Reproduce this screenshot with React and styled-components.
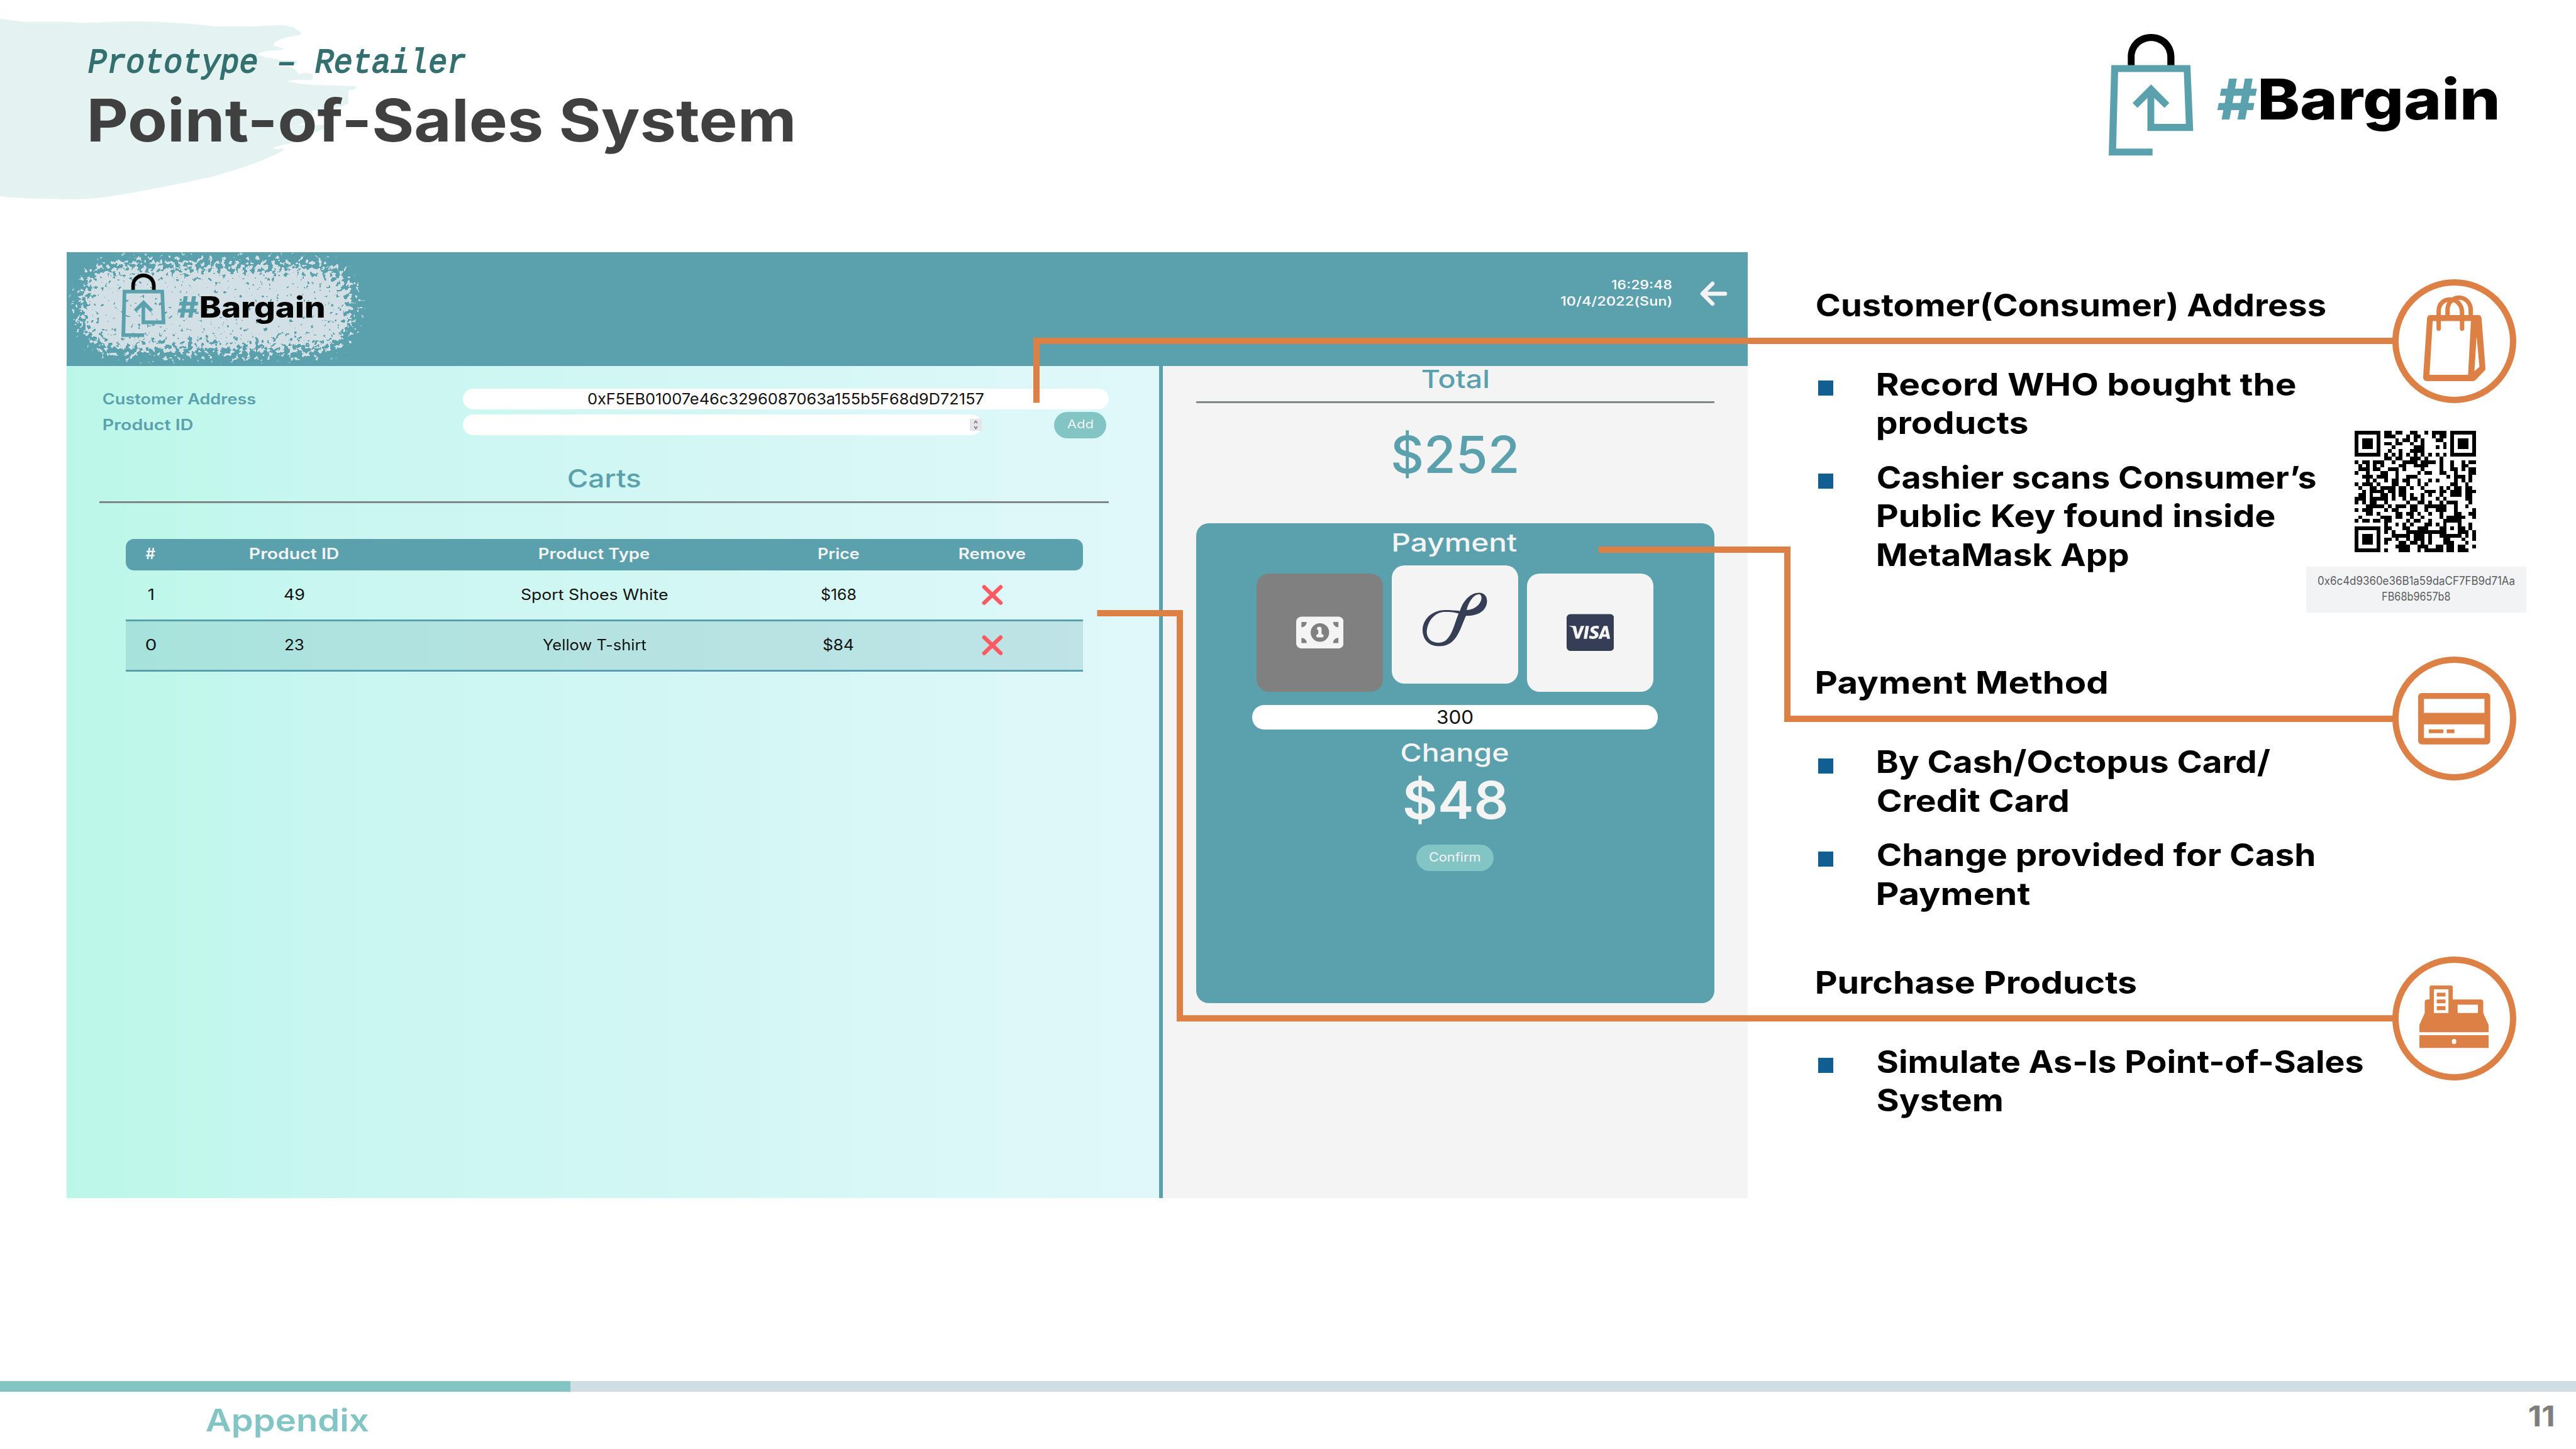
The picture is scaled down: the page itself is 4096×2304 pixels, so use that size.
import React, { useLayoutEffect, useRef, useState } from "react";
import styled, { createGlobalStyle } from "styled-components";
import { FaCcVisa, FaMoneyBill1 } from "react-icons/fa6";

const teal = "#5aa1ad";
const mint = "#83c5c4";
const orange = "#dc8046";
const paper = "#f4f4f4";
const ink = "#353e54";

const GlobalStyle = createGlobalStyle`
  * { box-sizing: border-box; }
  body {
    margin: 0;
    background: #fff;
    font-family: Inter, "Liberation Sans", sans-serif;
    overflow: hidden;
  }
`;

/* ---------- text with a fixed ink width ---------- */

const TextBox = styled.span`
  display: inline-block;
  flex: none;
  width: ${(p) => p.$w}px;
  height: ${(p) => p.$lh}px;
  line-height: ${(p) => p.$lh}px;
  font-size: ${(p) => p.$size}px;
  font-weight: ${(p) => p.$weight};
  color: ${(p) => p.$color};
  font-family: ${(p) => p.$family || "inherit"};
  font-style: ${(p) => (p.$italic ? "italic" : "normal")};
  -webkit-text-stroke: ${(p) => p.$stroke || 0}px ${(p) => p.$color};
  white-space: nowrap;
  vertical-align: top;
`;

const Stretch = styled.span`
  display: inline-block;
  transform-origin: left center;
`;

function Text({ children, w, size, lh, weight = 400, color = "#000", family, italic, stroke }) {
  const ref = useRef(null);
  const [transform, setTransform] = useState("none");
  useLayoutEffect(() => {
    const cs = getComputedStyle(ref.current);
    const ctx = document.createElement("canvas").getContext("2d");
    ctx.font = `${cs.fontStyle} ${cs.fontWeight} ${cs.fontSize} ${cs.fontFamily}`;
    const m = ctx.measureText(children);
    const sx = w / (m.actualBoundingBoxLeft + m.actualBoundingBoxRight);
    setTransform(`translateX(${m.actualBoundingBoxLeft * sx}px) scaleX(${sx})`);
  }, [children, w]);
  return (
    <TextBox
      $w={w} $size={size} $lh={lh || size * 1.25} $weight={weight}
      $color={color} $family={family} $italic={italic} $stroke={stroke}
    >
      <Stretch ref={ref} style={{ transform }}>{children}</Stretch>
    </TextBox>
  );
}

/* ---------- brand ---------- */

const BrandRow = styled.div`
  display: flex;
  align-items: flex-start;
  font-size: ${(p) => p.$size}px;
  position: relative;
`;
const BagMark = styled.svg`
  width: 1.51em;
  height: 2.17em;
  margin-right: 0.417em;
  overflow: visible;
`;
const BrandWord = styled.div`
  display: flex;
  gap: 0.075em;
  padding-top: 0.61em;
`;

function Brand({ size }) {
  return (
    <BrandRow $size={size}>
      <BagMark viewBox="97 120 297 750" preserveAspectRatio="none">
        <path d="M164 314V262C164 180 200 120 246 120S328 180 328 262V314H303V262C303 205 277 164 246 164S188 205 188 262V314Z" />
        <path fill={teal} d="M106 312H384L394 719H233V515L198 576L181 546L246 432L310 546L293 576L257 515V675H368L361 355H130L123 828H251V870H97Z" />
      </BagMark>
      <BrandWord>
        <Text w={0.72 * size} size={size} lh={size * 1.12} weight={800} color={teal}>#</Text>
        <Text w={4.22 * size} size={size} lh={size * 1.12} weight={800}>Bargain</Text>
      </BrandWord>
    </BrandRow>
  );
}

/* ---------- slide frame ---------- */

const Slide = styled.div`
  position: relative;
  width: 4096px;
  height: 2304px;
  display: flex;
  flex-direction: column;
  background: #fff;
  overflow: hidden;
`;
const Brush = styled.svg`
  position: absolute;
  left: 0;
  top: 0;
  width: 1355px;
  height: 339px;
`;
const SlideHeader = styled.header`
  position: relative;
  flex: none;
  height: 401px;
  display: flex;
  justify-content: space-between;
  padding: 54px 125px 0 141px;
`;
const Titles = styled.div`
  display: flex;
  flex-direction: column;
  padding-top: 17px;
`;
const TitleLine = styled.div`
  padding-left: 3px;
`;
const Main = styled.main`
  flex: none;
  display: flex;
  height: 1504px;
  padding-left: 105.5px;
`;

/* ---------- application window ---------- */

const Window = styled.section`
  width: 2673px;
  height: 1504px;
  flex: none;
  display: flex;
  flex-direction: column;
`;
const TopBar = styled.div`
  position: relative;
  height: 181px;
  flex: none;
  display: flex;
  justify-content: space-between;
  padding: 34px 31.5px 0 87px;
  background: ${teal};
`;
const Splash = styled.svg`
  position: absolute;
  left: 0;
  top: 0;
  width: 533px;
  height: 181px;
`;
const ClockArea = styled.div`
  display: flex;
  gap: 45px;
  padding-top: 6px;
`;
const Clock = styled.div`
  display: flex;
  flex-direction: column;
  align-items: flex-end;
`;
const BackArrow = styled.svg`
  width: 44px;
  height: 40px;
  margin-top: 6px;
`;
const Panes = styled.div`
  flex: 1;
  display: flex;
`;
const CartPane = styled.div`
  width: 1743.4px;
  border-right: 6px solid ${teal};
  padding: 36px 79.8px 0 52.8px;
  background: linear-gradient(90deg, #bbf7e9 0%, #c9f7f0 25%, #d4f7f4 60%, #e0f8fa 100%);
`;
const FormRow = styled.div`
  display: flex;
  align-items: center;
  height: 33px;
  margin-bottom: 8px;
  padding-left: 5.7px;
`;
const FieldLabel = styled.div`
  width: 572.5px;
  display: flex;
`;
const Field = styled.div`
  width: ${(p) => p.$w}px;
  height: ${(p) => p.$h}px;
  border-radius: ${(p) => p.$h / 2}px;
  background: #fff;
  display: flex;
  align-items: center;
  justify-content: ${(p) => (p.$end ? "flex-end" : "center")};
`;
const Spinner = styled.svg`
  width: 19px;
  height: 19px;
  background: #e6e6ea;
`;
const Pill = styled.div`
  width: ${(p) => p.$w}px;
  height: 42px;
  flex: none;
  border-radius: 21px;
  background: ${mint};
  display: flex;
  align-items: center;
  justify-content: center;
  ${(p) => p.$right && "margin: 0 4.6px 0 auto;"}
  ${(p) => p.$top && `margin-top: ${p.$top}px;`}
`;
const Heading = styled.div`
  display: flex;
  justify-content: center;
  margin-top: ${(p) => p.$top}px;
`;
const Rule = styled.div`
  height: 3px;
  margin-top: 10.5px;
  background: #7f8787;
`;
const Table = styled.div`
  width: 1522.3px;
  margin: 57.4px 0 0 41.8px;
`;
const TableRow = styled.div`
  display: grid;
  grid-template-columns: 79px 377px 578px 199px 289px;
  align-items: center;
  justify-items: center;
  height: 80.5px;
  border-bottom: 3px solid ${teal};
  background: ${(p) => (p.$shaded ? "rgba(90, 161, 173, 0.24)" : "transparent")};
`;
const TableHead = styled(TableRow)`
  height: 50.2px;
  padding-bottom: 2px;
  border: 0;
  border-radius: 13px;
  background: ${teal};
`;
const Cross = styled.svg`
  width: 34px;
  height: 32px;
`;

const PayPane = styled.div`
  flex: 1;
  padding: 0 53px;
  background: ${paper};
`;
const PayCard = styled.div`
  height: 763px;
  margin-top: 59px;
  padding-top: 6.6px;
  border-radius: 20px;
  background: ${teal};
  display: flex;
  flex-direction: column;
  align-items: center;
`;
const Methods = styled.div`
  display: flex;
  gap: 14px;
  margin: 23.5px 0 21px;
`;
const Method = styled.div`
  width: 201px;
  height: 188.5px;
  border-radius: 20px;
  display: flex;
  align-items: center;
  justify-content: center;
  background: ${(p) => (p.$active ? "#808080" : paper)};
  color: ${(p) => (p.$active ? paper : ink)};
  margin-top: ${(p) => (p.$raised ? -13.2 : 0)}px;
  svg { display: block; }
`;
const OctopusMark = styled.svg`
  width: 103px;
  height: 86px;
  margin-bottom: 15px;
`;

/* ---------- notes ---------- */

const Notes = styled.aside`
  margin-left: 110.5px;
  padding-top: 52.8px;
`;
const Note = styled.section`
  display: flex;
  height: ${(p) => p.$h}px;
`;
const NoteText = styled.div`
  width: 914.5px;
  flex: none;
`;
const Bullets = styled.ul`
  list-style: none;
  margin: 65px 0 0;
  padding: 0;
  display: flex;
  flex-direction: column;
  gap: 25.2px;
`;
const Bullet = styled.li`
  display: flex;
  flex-direction: column;
  padding-left: 96.5px;
  position: relative;
  &::before {
    content: "";
    position: absolute;
    left: 2px;
    top: 24.5px;
    width: 23.5px;
    height: 24px;
    background: #115e93;
  }
`;
const NoteSide = styled.div`
  width: 197px;
  display: flex;
  flex-direction: column;
  align-items: center;
  margin-top: -10px;
`;
const Badge = styled.div`
  width: 197px;
  height: 197px;
  flex: none;
  border: 10px solid ${orange};
  border-radius: 50%;
  display: flex;
  align-items: center;
  justify-content: center;
  color: ${orange};
`;
const BadgeIcon = styled.svg`
  width: ${(p) => p.$w}px;
  height: ${(p) => p.$h}px;
  margin-bottom: ${(p) => p.$lift || 0}px;
  flex: none;
  overflow: visible;
`;
const Qr = styled.svg`
  width: 193.4px;
  height: 193px;
  flex: none;
  margin: 44.5px 122px 0 0;
`;
const KeyBox = styled.div`
  width: 349.5px;
  height: 73.5px;
  flex: none;
  margin: 22.5px 120px 0 0;
  padding-top: 11px;
  background: #f1f3f5;
  display: flex;
  flex-direction: column;
  align-items: center;
`;
const Connectors = styled.svg`
  position: absolute;
  left: 0;
  top: 0;
  width: 4096px;
  height: 2304px;
  pointer-events: none;
`;

/* ---------- footer ---------- */

const Footer = styled.footer`
  margin-top: 291px;
`;
const Progress = styled.div`
  height: 17px;
  background: #cfdee3;
`;
const ProgressDone = styled.div`
  width: 907px;
  height: 100%;
  background: ${mint};
`;
const FooterRow = styled.div`
  display: flex;
  justify-content: space-between;
  padding: 12px 36px 0 328px;
`;

/* ---------- data ---------- */

const products = [
  { n: ["1", 8], id: ["49", 32], type: ["Sport Shoes White", 232.5], price: ["$168", 55] },
  { n: ["0", 16], id: ["23", 30], type: ["Yellow T-shirt", 165], price: ["$84", 48.5] },
];

const range = (s) =>
  s.split(",").flatMap((t) => {
    const [a, b = a] = t.split("-").map(Number);
    return Array.from({ length: b - a + 1 }, (_, i) => a + i);
  });

const qrRows = [
  "8-9,11-12,15-16,19,21-24", "8-10,14,16-17,21,23-24", "11,13-14,16,18,22-23",
  "8-9,11-12,15,18,24", "10,16-18,22,24", "9,12,15-18", "8,10,12,14,16,18,20,22,24",
  "8-9,11-12,15-17,19,23",
  "0,2-3,5-7,10,13-16,18-21,23,26,29,31-32", "1,3,5,7,12-13,16-19,23,26,29-30",
  "1-3,5-6,9-11,13,18,23,26-27,29,31-32", "0,3,7-8,11,17,19-20,23-24,27,31-32",
  "2-4,6-8,11,14-16,25,27-29,31", "3,5,8,10-11,13-14,17,20,22,27,29,31",
  "0,2-4,6,10-11,14,17,19,26-27,30", "1,4-5,7-10,12-13,15,18,23,25,27-28,30-31",
  "2,4-7,9-10,12-13,19-21,23-24,26-28,30-32", "1-2,4,7-8,10,12-13,15,18,20,23,26-28,30-31",
  "0-2,4-8,10,13,15-16,18,22,24,30-31", "0,2,4-5,8,14,17-18,20,23,25-27,31",
  "3-7,9,11-13,15-16,19-24,27,30", "0,2-4,8,10-11,15-16,19,22-24,27,32",
  "3-4,6,11-12,14-15,17,20,23,27-28,31-32", "1,7-9,11-12,15,18,23,25-29,32",
  "0,2-3,5-6,8-9,14,16-17,20,24-28", "8,11,13,15,19-20,22,24,28,31",
  "8-9,13-14,17-19,23-24,26,28-29,31", "8,10,14-24,28-30,32",
  "10-14,16-18,20,23-28,30,32", "8-9,11,14,16-18,20,24-25,29,32",
  "8,12-13,15-16,18,20,24-26,30", "11-14,17-19,22-23,25-26,28-29,32",
  "8,12-14,17,19-23,25-26,28-30",
];
const finders = [[0, 0], [26, 0], [0, 26]];

/* ---------- parts ---------- */

const Row = ({ text, w }) => <Text w={w} size={50} lh={61.4} weight={700}>{text}</Text>;

const CellText = ({ v }) => <Text w={v[1]} size={24} weight={400} color="#111">{v[0]}</Text>;
const HeadText = ({ children, w }) => <Text w={w} size={24} weight={600} color="#f4f4f4">{children}</Text>;

const CrossMark = () => (
  <Cross viewBox="0 0 34 32">
    <path d="M4 3.5 30 28.5M30 3.5 4 28.5" stroke="#ff5a62" strokeWidth="6.5" strokeLinecap="round" />
  </Cross>
);

const BagIcon = () => (
  <BadgeIcon $w={99} $h={136} $lift={8} viewBox="820 145 373 365" preserveAspectRatio="none">
    <path fill="currentColor" fillRule="evenodd" d="M862 228H1150Q1169 228 1170 243L1193 455Q1194 461 1188 465L1133 506Q1127 510 1120 510H840Q818 508 820 490L843 243Q845 228 862 228ZM877 254L858 483H1089L1106 254ZM1140 318L1127 468L1157 449Z" />
    <g fill="none" stroke="currentColor" strokeWidth="7" strokeLinecap="round">
      <path vectorEffect="non-scaling-stroke" d="M913 286V212C913 178 945 162 983 162S1053 184 1053 218V286" />
      <path vectorEffect="non-scaling-stroke" d="M966 232V208C966 176 996 154 1035 154S1105 176 1105 206V236" />
    </g>
  </BadgeIcon>
);

const CardIcon = () => (
  <BadgeIcon $w={114.7} $h={81.7} viewBox="279 172 447 177" preserveAspectRatio="none">
    <path fill="currentColor" fillRule="evenodd" d="M299 172H706Q726 174 726 183V338Q724 347 706 349H299Q281 347 279 338V183Q281 174 299 172ZM315 192V240H690V192ZM315 280V327H690V280Z" />
    <path fill="currentColor" d="M345 297H435V310H345ZM456 297H504V310H456Z" />
  </BadgeIcon>
);

const RegisterIcon = () => (
  <BadgeIcon $w={110} $h={99.2} $lift={5} viewBox="285 1178 429 215" preserveAspectRatio="none">
    <path fill="currentColor" fillRule="evenodd" d="M358 1178H482Q492 1179 492 1184V1226H668Q681 1227 681 1234V1273L714 1314V1339H285V1314L318 1273V1234Q318 1227 332 1226H348V1184Q348 1179 358 1178ZM375 1191V1273H465V1191ZM522 1244V1273H648V1244ZM285 1349H714V1393H285ZM500 1362A14 9 0 1 0 500 1380A14 9 0 1 0 500 1362Z" />
    <path fill="currentColor" d="M393 1203H447V1216H393ZM393 1226H447V1239H393ZM393 1249H447V1263H393Z" />
  </BadgeIcon>
);

const QrCode = () => (
  <Qr viewBox="0 0 33 33" shapeRendering="crispEdges">
    {qrRows.map((r, y) => range(r).map((x) => <rect key={`${x}-${y}`} x={x} y={y} width="1" height="1" />))}
    {finders.map(([x, y]) => (
      <path key={`f${x}-${y}`} fillRule="evenodd" d={`M${x} ${y}h7v7h-7zM${x + 1} ${y + 1}v5h5v-5zM${x + 2} ${y + 2}h3v3h-3z`} />
    ))}
  </Qr>
);

export default function App() {
  return (
    <Slide>
      <GlobalStyle />
      <Brush viewBox="0 0 1568 1320" preserveAspectRatio="none">
        <path fill="#e4f2f1" d="M0 117L12 122Q30 132 46 135H122Q150 144 196 137Q260 126 318 141Q360 147 396 164H464Q490 160 516 156Q542 158 555 208Q552 218 540 222Q504 250 504 270V284Q520 294 522 306Q518 314 490 315Q474 328 474 340Q486 348 488 355Q514 366 516 374L546 376V401H502Q504 408 534 412Q548 440 550 460Q564 440 575 462V492Q570 500 552 494Q534 496 528 502Q550 524 600 528L654 534Q660 545 650 554Q640 556 641 570V640Q620 682 575 684V740L548 776L600 774H606Q604 792 592 802Q560 850 546 880Q504 904 502 920Q512 926 518 918L523 928Q480 1010 396 1088Q300 1165 200 1218Q150 1240 90 1230Q20 1228 0 1213Z" />
      </Brush>

      <SlideHeader>
        <Titles>
          <Text w={599} size={54} lh={60} weight={400} italic stroke={1.8} color="#33706f" family='"Liberation Mono", monospace'>Prototype – Retailer</Text>
          <TitleLine>
            <Text w={1116} size={94} lh={120} weight={700} color="#404040">Point-of-Sales System</Text>
          </TitleLine>
        </Titles>
        <Brand size={89} />
      </SlideHeader>

      <Main>
        <Window>
          <TopBar>
            <Splash viewBox="0 0 533 181">
              <filter id="spray" x="-20%" y="-40%" width="140%" height="180%" colorInterpolationFilters="sRGB">
                <feGaussianBlur in="SourceGraphic" stdDeviation="16" result="soft" />
                <feTurbulence type="fractalNoise" baseFrequency="0.15" numOctaves="3" seed="7" result="noise" />
                <feComposite in="soft" in2="noise" operator="arithmetic" k2="1" k3="2.3" k4="-1.62" />
                <feComponentTransfer>
                  <feFuncA type="linear" slope="8" intercept="0" />
                </feComponentTransfer>
                <feComposite in2="soft" operator="in" result="mask" />
                <feComponentTransfer in="mask" result="hard">
                  <feFuncA type="linear" slope="14" intercept="-0.5" />
                </feComponentTransfer>
                <feFlood floodColor="#d2e0e5" />
                <feComposite in2="hard" operator="in" />
              </filter>
              <rect x="26" y="24" width="424" height="128" rx="54" fill="#fff" filter="url(#spray)" />
            </Splash>
            <Brand size={46.4} />
            <ClockArea>
              <Clock>
                <Text w={96.5} size={19.5} lh={25.6} weight={600} color="#f4f4f4">16:29:48</Text>
                <Text w={177} size={19.5} lh={25.6} weight={600} color="#f4f4f4">10/4/2022(Sun)</Text>
              </Clock>
              <BackArrow viewBox="0 0 44 40">
                <path d="M40 20H5M20 4 4 20 20 36" fill="none" stroke="#f4f4f4" strokeWidth="6.4" strokeLinecap="round" strokeLinejoin="round" />
              </BackArrow>
            </ClockArea>
          </TopBar>

          <Panes>
            <CartPane>
              <FormRow>
                <FieldLabel><Text w={243} size={24} weight={600} color={teal}>Customer Address</Text></FieldLabel>
                <Field $w={1026.6} $h={33}><Text w={629} size={24.5} color="#111">0xF5EB01007e46c3296087063a155b5F68d9D72157</Text></Field>
              </FormRow>
              <FormRow>
                <FieldLabel><Text w={143} size={24} weight={600} color={teal}>Product ID</Text></FieldLabel>
                <Field $w={824.5} $h={33} $end>
                  <Spinner viewBox="0 0 19 19"><path d="M7 7 9.5 3.5 12 7M7 12 9.5 15.5 12 12" fill="none" stroke="#77777c" strokeWidth="1.6" /></Spinner>
                </Field>
                <Pill $w={82.4} $right><Text w={41} size={18} color="#f4f4f4">Add</Text></Pill>
              </FormRow>
              <Heading $top={44}><Text w={114} size={40} lh={50} weight={500} color={teal}>Carts</Text></Heading>
              <Rule />
              <Table>
                <TableHead>
                  <HeadText w={16}>#</HeadText>
                  <HeadText w={142}>Product ID</HeadText>
                  <HeadText w={176}>Product Type</HeadText>
                  <HeadText w={65.5}>Price</HeadText>
                  <HeadText w={106}>Remove</HeadText>
                </TableHead>
                {products.map((p, i) => (
                  <TableRow key={p.id[0]} $shaded={i % 2 === 1}>
                    <CellText v={p.n} />
                    <CellText v={p.id} />
                    <CellText v={p.type} />
                    <CellText v={p.price} />
                    <CrossMark />
                  </TableRow>
                ))}
              </Table>
            </CartPane>

            <PayPane>
              <Heading $top={-4.4}><Text w={105.5} size={40} lh={50} weight={500} color={teal}>Total</Text></Heading>
              <Rule />
              <Heading $top={31.5}><Text w={196.5} size={81} lh={100} weight={500} color={teal}>$252</Text></Heading>
              <PayCard>
                <Text w={196} size={39} lh={50} weight={500} color="#f4f4f4">Payment</Text>
                <Methods>
                  <Method $active><FaMoneyBill1 size={75.5} /></Method>
                  <Method $raised>
                    <OctopusMark viewBox="692 263 187 169" preserveAspectRatio="none">
                      <path fill={ink} fillRule="evenodd" d="M800 321C808 290 830 264 855 264C872 264 878 277 878 291C877 316 858 337 817 336C800 378 790 431 740 431C710 431 692 411 692 380C693 345 720 319 757 318C772 318 786 319 800 321ZM819 318C826 288 842 267 857 269C870 276 858 316 819 318ZM796 329C780 324 768 324 752 324C720 328 704 362 704 388C705 408 718 420 738 420C774 420 780 372 796 329Z" />
                    </OctopusMark>
                  </Method>
                  <Method><FaCcVisa size={75.5} /></Method>
                </Methods>
                <Field $w={645.3} $h={38.3}><Text w={56.5} size={29.5} color="#111">300</Text></Field>
                <Heading $top={12}><Text w={169.5} size={39} lh={50} weight={500} color="#f4f4f4">Change</Text></Heading>
                <Heading $top={6}><Text w={162} size={82} lh={90} weight={600} color="#f4f4f4">$48</Text></Heading>
                <Pill $w={123} $top={25}><Text w={80.5} size={19.5} color="#f4f4f4">Confirm</Text></Pill>
              </PayCard>
            </PayPane>
          </Panes>
        </Window>

        <Notes>
          <Note $h={600.5}>
            <NoteText>
              <Text w={809} size={50} lh={62} weight={700}>Customer(Consumer) Address</Text>
              <Bullets>
                <Bullet>
                  <Row w={663.5} text="Record WHO bought the" />
                  <Row w={238.5} text="products" />
                </Bullet>
                <Bullet>
                  <Row w={696.5} text="Cashier scans Consumer’s" />
                  <Row w={630.5} text="Public Key found inside" />
                  <Row w={398} text="MetaMask App" />
                </Bullet>
              </Bullets>
            </NoteText>
            <NoteSide>
              <Badge><BagIcon /></Badge>
              <QrCode />
              <KeyBox>
                <Text w={312} size={18} lh={24.8} color="#5c5c60">0x6c4d9360e36B1a59daCF7FB9d71Aa</Text>
                <Text w={108.5} size={18} lh={24.8} color="#5c5c60">FB68b9657b8</Text>
              </KeyBox>
            </NoteSide>
          </Note>
          <Note $h={476.4}>
            <NoteText>
              <Text w={461} size={50} lh={62} weight={700}>Payment Method</Text>
              <Bullets>
                <Bullet>
                  <Row w={623.5} text="By Cash/Octopus Card/" />
                  <Row w={302} text="Credit Card" />
                </Bullet>
                <Bullet>
                  <Row w={694} text="Change provided for Cash" />
                  <Row w={242} text="Payment" />
                </Bullet>
              </Bullets>
            </NoteText>
            <NoteSide><Badge><CardIcon /></Badge></NoteSide>
          </Note>
          <Note $h={330}>
            <NoteText>
              <Text w={508} size={50} lh={62} weight={700}>Purchase Products</Text>
              <Bullets>
                <Bullet>
                  <Row w={771.5} text="Simulate As-Is Point-of-Sales" />
                  <Row w={197} text="System" />
                </Bullet>
              </Bullets>
            </NoteText>
            <NoteSide><Badge><RegisterIcon /></Badge></NoteSide>
          </Note>
        </Notes>
      </Main>

      <Footer>
        <Progress><ProgressDone /></Progress>
        <FooterRow>
          <Text w={257.5} size={49.5} lh={66} weight={600} color={mint}>Appendix</Text>
          <Text w={38} size={45} lh={54} weight={700} color="#7f7f7f">11</Text>
        </FooterRow>
      </Footer>

      <Connectors viewBox="0 0 4096 2304">
        <g fill="none" stroke={orange} strokeWidth="10">
          <path d="M1648 640.5V542H3806" />
          <path d="M2541.7 874H2842V1143H3806" />
          <path d="M1744.5 975H1876V1619.3H3806" />
        </g>
      </Connectors>
    </Slide>
  );
}
